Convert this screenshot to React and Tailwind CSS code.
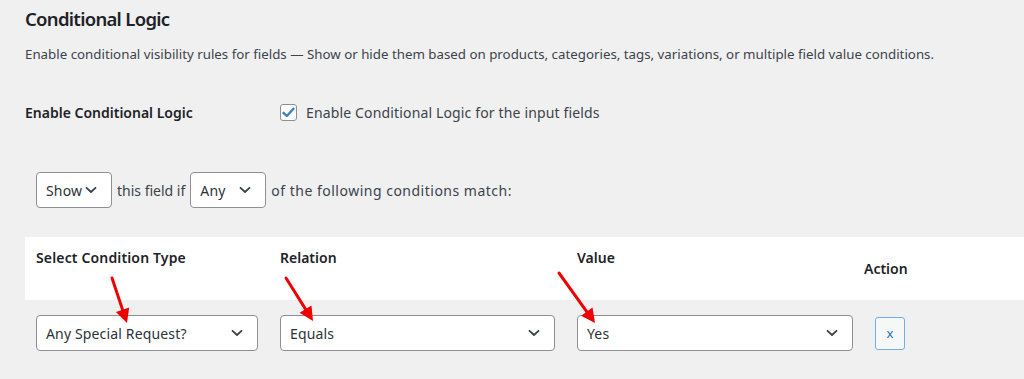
import React from "react";

const font = { fontFamily: '"Noto Sans", "Open Sans", sans-serif' };

function Chevron() {
  return (
    <svg width="12" height="8" viewBox="0 0 12 8" className="shrink-0">
      <path d="M1.5 1.8 L6 6 L10.5 1.8" fill="none" stroke="#3c434a" strokeWidth="1.8" strokeLinecap="round" strokeLinejoin="round" />
    </svg>
  );
}

function Select({ value, className, chevron = true }) {
  return (
    <div className={"h-[36px] flex items-center justify-between bg-white border border-[#8c8f94] rounded-[4px] pl-[9px] pr-[14px] text-[14px] tracking-[0.15px] text-[#2c3338] " + className}>
      <span>{value}</span>
      {chevron && <Chevron />}
    </div>
  );
}

function Arrow({ x1, y1, x2, y2 }) {
  const dx = x2 - x1, dy = y2 - y1;
  const len = Math.sqrt(dx * dx + dy * dy);
  const ux = dx / len, uy = dy / len;
  const hl = 14, hw = 7;
  const bx = x2 - ux * hl, by = y2 - uy * hl;
  const px = -uy, py = ux;
  const pts = `${x2},${y2} ${bx + px * hw},${by + py * hw} ${bx - px * hw},${by - py * hw}`;
  return (
    <g>
      <line x1={x1} y1={y1} x2={bx + ux * 2} y2={by + uy * 2} stroke="#ee0000" strokeWidth="3" strokeLinecap="round" />
      <polygon points={pts} fill="#ee0000" />
    </g>
  );
}

export default function App() {
  return (
    <div className="relative w-[1024px] h-[379px] overflow-hidden bg-[#f0f0f1] text-[#3c434a]" style={font}>
      <div className="pl-[25px] pt-[5px]">
        <h2 className="text-[18.5px] leading-[28px] font-semibold tracking-[-0.7px] text-[#1d2327]">Conditional Logic</h2>
        <p className="mt-[11px] text-[13.3px] leading-[20px] text-[#3c434a]">
          Enable conditional visibility rules for fields — Show or hide them based on products, categories, tags, variations, or multiple field value conditions.
        </p>
        <div className="mt-[38px] flex items-center h-[20px]">
          <div className="w-[255px] text-[14px] font-semibold text-[#1d2327]">Enable Conditional Logic</div>
          <div className="flex items-center">
            <div className="w-[17px] h-[17px] bg-white border border-[#8c8f94] rounded-[3px] flex items-center justify-center">
              <svg width="13" height="11" viewBox="0 0 13 11">
                <path d="M1.5 5.8 L4.8 9 L11.5 1.8" fill="none" stroke="#3582c4" strokeWidth="2.4" strokeLinecap="round" strokeLinejoin="round" />
              </svg>
            </div>
            <span className="ml-[9px] text-[14px] tracking-[0.15px] text-[#3c434a]">Enable Conditional Logic for the input fields</span>
          </div>
        </div>
        <div className="mt-[50px] pl-[11px] flex items-center gap-[5px] text-[14px] text-[#3c434a]">
          <Select value="Show" className="w-[76px]" />
          <span>this field if</span>
          <Select value="Any" className="w-[76px]" />
          <span className="tracking-[0.5px]">of the following conditions match:</span>
        </div>
      </div>

      <div className="mt-[29px] ml-[25px] bg-white h-[63px] flex pl-[11px] text-[14px] font-semibold text-[#1d2327]">
        <div className="w-[244px] pt-[10px] tracking-[0.15px]">Select Condition Type</div>
        <div className="w-[297px] pt-[10px]">Relation</div>
        <div className="w-[298px] pt-[10px]">Value</div>
        <div className="flex-1 flex items-center"><span className="-ml-[11px] -mt-[1px]">Action</span></div>
      </div>

      <div className="mt-[15px] ml-[25px] pl-[11px] flex items-center">
        <div className="w-[244px]"><Select value="Any Special Request?" className="w-[222px]" /></div>
        <div className="w-[297px]"><Select value="Equals" className="w-[275px]" /></div>
        <div className="w-[298px]"><Select value="Yes" className="w-[276px]" /></div>
        <div className="flex-1">
          <div className="w-[30px] h-[33px] rounded-[3px] border border-[#72aee6] bg-[#f6f7f7] flex items-center justify-center text-[13px] text-[#2271b1] leading-none">x</div>
        </div>
      </div>

      <svg className="absolute inset-0 pointer-events-none" width="1024" height="379">
        <Arrow x1={112} y1={278} x2={127} y2={323} />
        <Arrow x1={286} y1={278} x2={313} y2={321} />
        <Arrow x1={559} y1={273} x2={595} y2={323} />
      </svg>
    </div>
  );
}
